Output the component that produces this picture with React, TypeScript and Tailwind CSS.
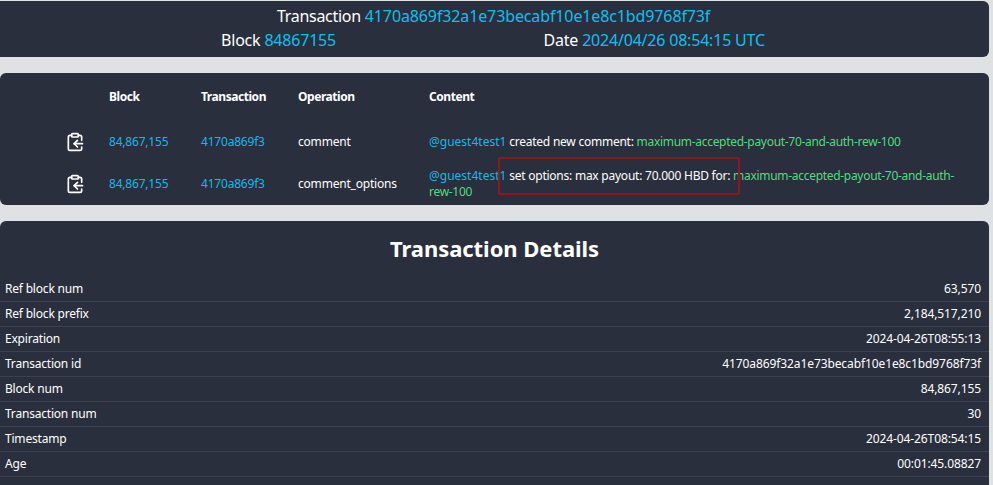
import React from 'react';
import { ClipboardCopy } from 'lucide-react';

const details = [
  ['Ref block num', '63,570'],
  ['Ref block prefix', '2,184,517,210'],
  ['Expiration', '2024-04-26T08:55:13'],
  ['Transaction id', '4170a869f32a1e73becabf10e1e8c1bd9768f73f'],
  ['Block num', '84,867,155'],
  ['Transaction num', '30'],
  ['Timestamp', '2024-04-26T08:54:15'],
  ['Age', '00:01:45.08827'],
];

const permlink = 'maximum-accepted-payout-70-and-auth-rew-100';

const OperationRow = ({ name, children }: { name: string; children: React.ReactNode }) => (
  <div className="grid grid-cols-[109px_92px_97px_131px_1fr] items-center min-h-[34px]">
    <div className="flex justify-end pr-[24px]">
      <ClipboardCopy size={20} strokeWidth={2} className="text-white" />
    </div>
    <div className="text-[#12bbe8]">84,867,155</div>
    <div className="text-[#12bbe8]">4170a869f3</div>
    <div className="text-white">{name}</div>
    <div className="pr-[30px] leading-[16px]">{children}</div>
  </div>
);

export default function App() {
  return (
    <div className="relative h-[485px] overflow-hidden bg-[#dee2e3] pt-px pr-[4px] font-['Noto_Sans',sans-serif] text-[12px] tracking-[-0.2px]">
      <div className="h-[56px] rounded-r-md bg-[#2a2f3e] pt-[3px] text-[16px] leading-[24px] tracking-[-0.12px] text-white">
        <div className="pl-[277px]">
          <span className="tracking-[-0.3px]">Transaction</span>{' '}
          <span className="text-[#0fc0ef]">4170a869f32a1e73becabf10e1e8c1bd9768f73f</span>
        </div>
        <div className="grid grid-cols-2">
          <div className="pl-[221px] tracking-[-0.2px]">
            Block <span className="text-[#0fc0ef]">84867155</span>
          </div>
          <div className="pl-[49px] tracking-[-0.2px]">
            Date <span className="text-[#0fc0ef]">2024/04/26 08:54:15 UTC</span>
          </div>
        </div>
      </div>

      <div className="mt-[16px] h-[132px] rounded-md bg-[#2a2f3e] pt-[16px]">
        <div className="grid grid-cols-[109px_92px_97px_131px_1fr] font-bold leading-[16px] tracking-[-0.45px] text-white">
          <div />
          <div>Block</div>
          <div>Transaction</div>
          <div>Operation</div>
          <div>Content</div>
        </div>
        <div className="mt-[20px]">
          <OperationRow name="comment">
            <span className="text-[#12bbe8] tracking-normal">@guest4test1</span>
            <span className="tracking-[-0.24px] text-white"> created new comment: </span>
            <span className="tracking-[-0.3px] text-[#4ade80]">{permlink}</span>
          </OperationRow>
        </div>
        <div className="mt-[8px]">
          <OperationRow name="comment_options">
            <span className="text-[#12bbe8] tracking-normal">@guest4test1</span>
            <span className="tracking-[-0.24px] text-white"> set options: max payout: 70.000 HBD for: </span>
            <span className="tracking-[-0.3px] text-[#4ade80]">{permlink}</span>
          </OperationRow>
        </div>
      </div>

      <div className="mt-[16px] h-[300px] rounded-md bg-[#2a2f3e] pt-[11px]">
        <h2 className="mb-[13px] text-center text-[22px] leading-[32px] font-bold tracking-[-0.05px] text-white">
          Transaction Details
        </h2>
        {details.map(([label, value]) => (
          <div
            key={label}
            className="flex h-[25px] items-center justify-between border-b border-[#3a4152] pr-[8px] pl-[5px] text-white"
          >
            <span>{label}</span>
            <span className="tracking-[-0.1px]">{value}</span>
          </div>
        ))}
      </div>

      <div className="absolute top-[157px] left-[498px] h-[38px] w-[242px] rounded-[2px] border-2 border-[#8a1a20]" />
    </div>
  );
}
